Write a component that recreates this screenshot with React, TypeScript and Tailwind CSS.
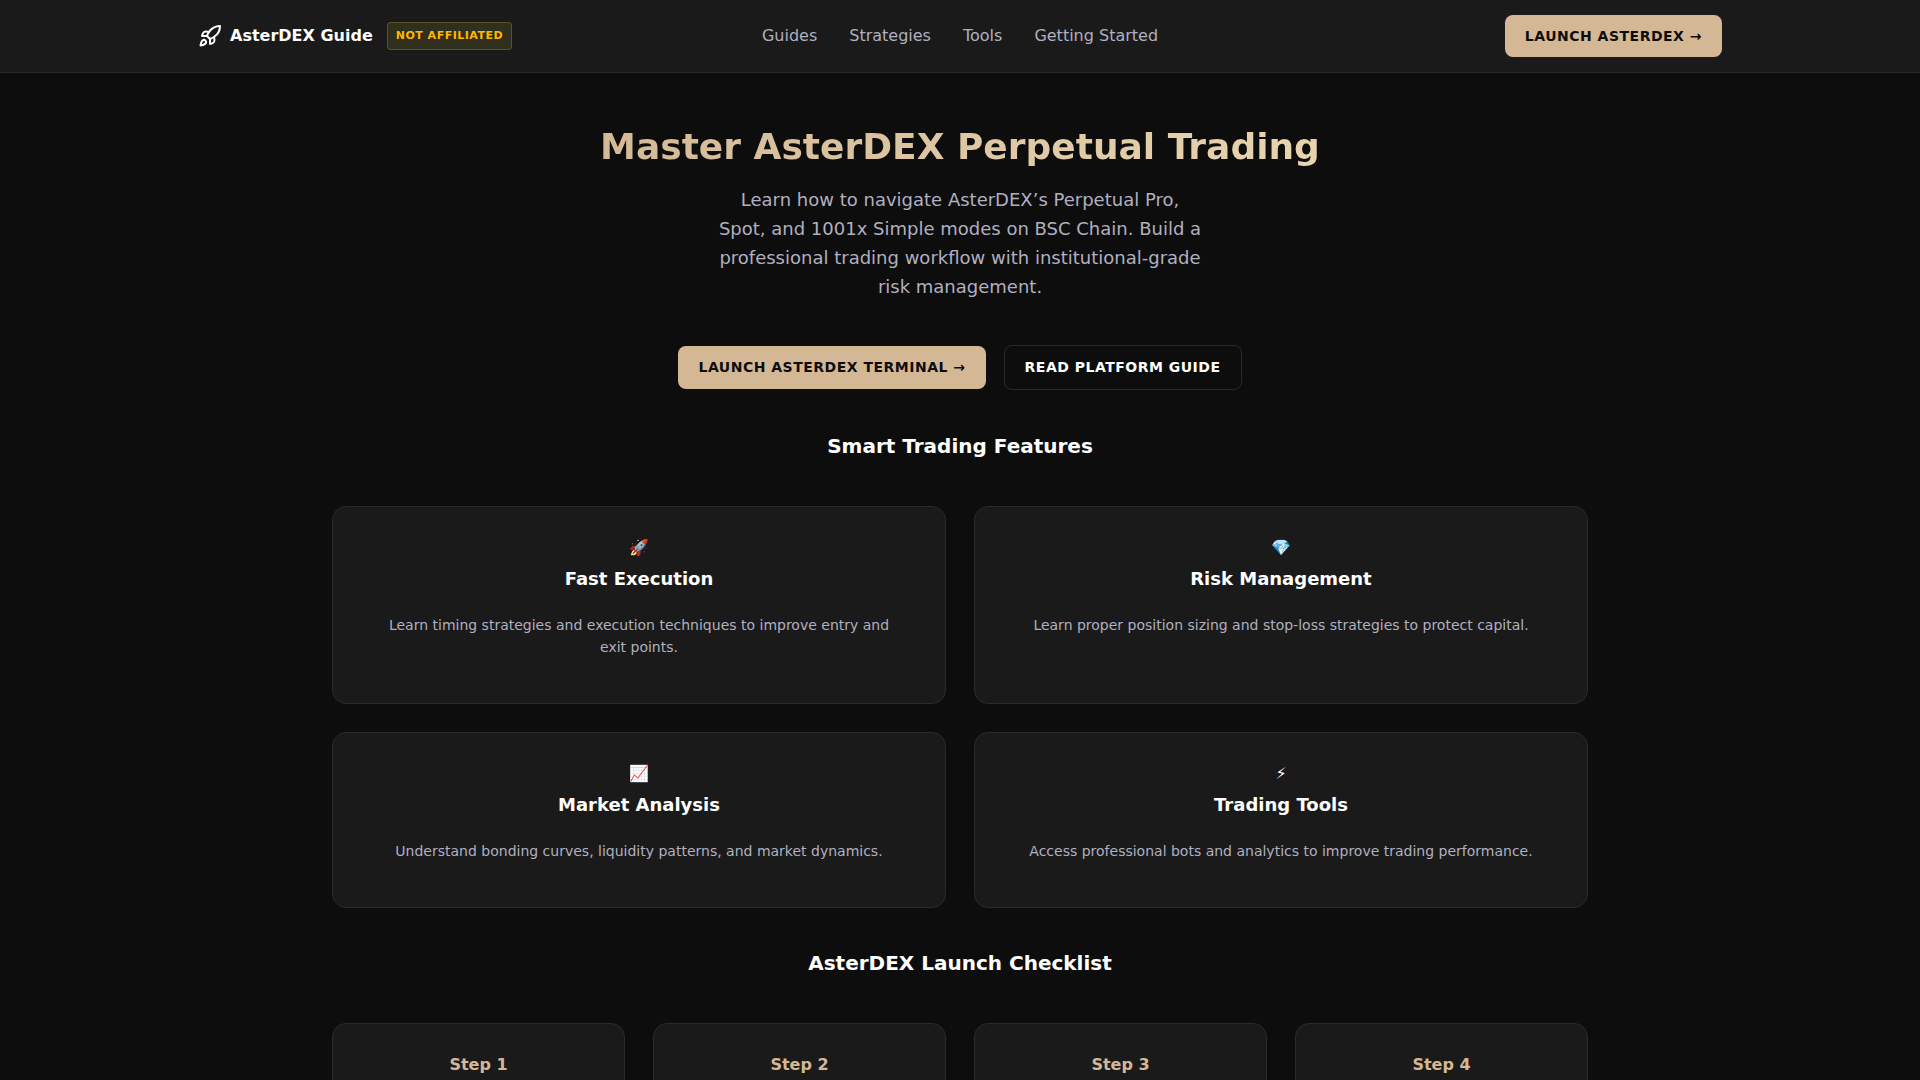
import { Rocket } from 'lucide-react'
import clsx from 'clsx'

const navLinks = ['Guides', 'Strategies', 'Tools', 'Getting Started']

const features = [
  {
    icon: '🚀',
    title: 'Fast Execution',
    text: 'Learn timing strategies and execution techniques to improve entry and exit points.'
  },
  {
    icon: '💎',
    title: 'Risk Management',
    text: 'Learn proper position sizing and stop-loss strategies to protect capital.'
  },
  {
    icon: '📈',
    title: 'Market Analysis',
    text: 'Understand bonding curves, liquidity patterns, and market dynamics.'
  },
  {
    icon: '⚡',
    title: 'Trading Tools',
    text: 'Access professional bots and analytics to improve trading performance.'
  }
]

const steps = ['Step 1', 'Step 2', 'Step 3', 'Step 4']

const ActionLink = ({
  children,
  className
}: {
  children: React.ReactNode
  className?: string
}) => (
  <a
    href="#"
    className={clsx(
      'rounded-lg px-5 py-[11px] text-sm font-bold uppercase tracking-[0.5px] whitespace-nowrap',
      className
    )}
  >
    {children}
  </a>
)

const SectionTitle = ({ children }: { children: React.ReactNode }) => (
  <h2 className="text-center text-xl leading-8 font-bold">{children}</h2>
)

const Header = () => (
  <header className="border-b border-[#2a2a2a] bg-[#1a1a1a] px-6">
    <div className="mx-auto grid h-18 max-w-[1524px] grid-cols-[1fr_auto_1fr] items-center gap-6">
      {/* Logo */}
      <div className="flex items-center">
        <a href="#" className="flex items-center gap-2 font-bold">
          <Rocket size={24} />
          <span>AsterDEX Guide</span>
        </a>
        <span className="ml-3.5 rounded border border-[#ffeb3b]/20 bg-[#ffeb3b]/10 px-2 py-1 text-[11px] leading-[18px] font-bold tracking-[0.5px] text-[#ffb800]">
          NOT AFFILIATED
        </span>
      </div>

      <nav className="flex gap-8 text-[#b0b0c0]">
        {navLinks.map(link => (
          <a key={link} href="#">
            {link}
          </a>
        ))}
      </nav>

      <div className="flex justify-end">
        <ActionLink className="bg-[#d4b896] text-[#0d0d0d]">Launch AsterDEX →</ActionLink>
      </div>
    </div>
  </header>
)

const Hero = () => (
  <section className="flex flex-col items-center pt-[45px] text-center">
    <h1 className="bg-linear-135 from-[#d4b896] to-[#e8d5b0] bg-clip-text text-4xl leading-[58px] font-bold text-transparent">
      Master AsterDEX Perpetual Trading
    </h1>
    <p className="mt-[9px] max-w-[490px] text-lg leading-[29px] text-[#b0b0c0]">
      Learn how to navigate AsterDEX’s Perpetual Pro, Spot, and 1001x Simple modes on BSC Chain.
      Build a professional trading workflow with institutional-grade risk management.
    </p>
    <div className="mt-11 flex items-center gap-4.5">
      <ActionLink className="bg-[#d4b896] leading-[21px] text-[#0d0d0d]">
        Launch AsterDEX Terminal →
      </ActionLink>
      <ActionLink className="border border-[#2a2a2a] leading-[21px] text-white">
        Read Platform Guide
      </ActionLink>
    </div>
  </section>
)

export default function App() {
  return (
    <div className="min-h-screen bg-[#0d0d0d] font-['DejaVu_Sans',sans-serif] text-base text-white">
      <Header />
      <main className="mx-auto max-w-[1304px] px-6">
        <Hero />

        {/* Features */}
        <section className="pt-10">
          <SectionTitle>Smart Trading Features</SectionTitle>
          <div className="mt-11 grid grid-cols-2 gap-7">
            {features.map(feature => (
              <article
                key={feature.title}
                className="rounded-[14px] border border-[#2a2a2a] bg-[#1a1a1a] px-12 pt-7 pb-[45px] text-center"
              >
                <div className="leading-[26px]">{feature.icon}</div>
                <h3 className="mt-1 text-lg leading-7 font-bold">{feature.title}</h3>
                <p className="mt-[21px] text-sm leading-[22px] text-[#b0b0c0]">{feature.text}</p>
              </article>
            ))}
          </div>
        </section>

        {/* Checklist */}
        <section className="pt-[39px]">
          <SectionTitle>AsterDEX Launch Checklist</SectionTitle>
          <div className="mt-11 grid grid-cols-4 gap-7">
            {steps.map(step => (
              <article
                key={step}
                className="min-h-40 rounded-[14px] border border-[#2a2a2a] bg-[#1a1a1a] p-7 text-center"
              >
                <h3 className="leading-[26px] font-bold text-[#d4b896]">{step}</h3>
              </article>
            ))}
          </div>
        </section>
      </main>
    </div>
  )
}
